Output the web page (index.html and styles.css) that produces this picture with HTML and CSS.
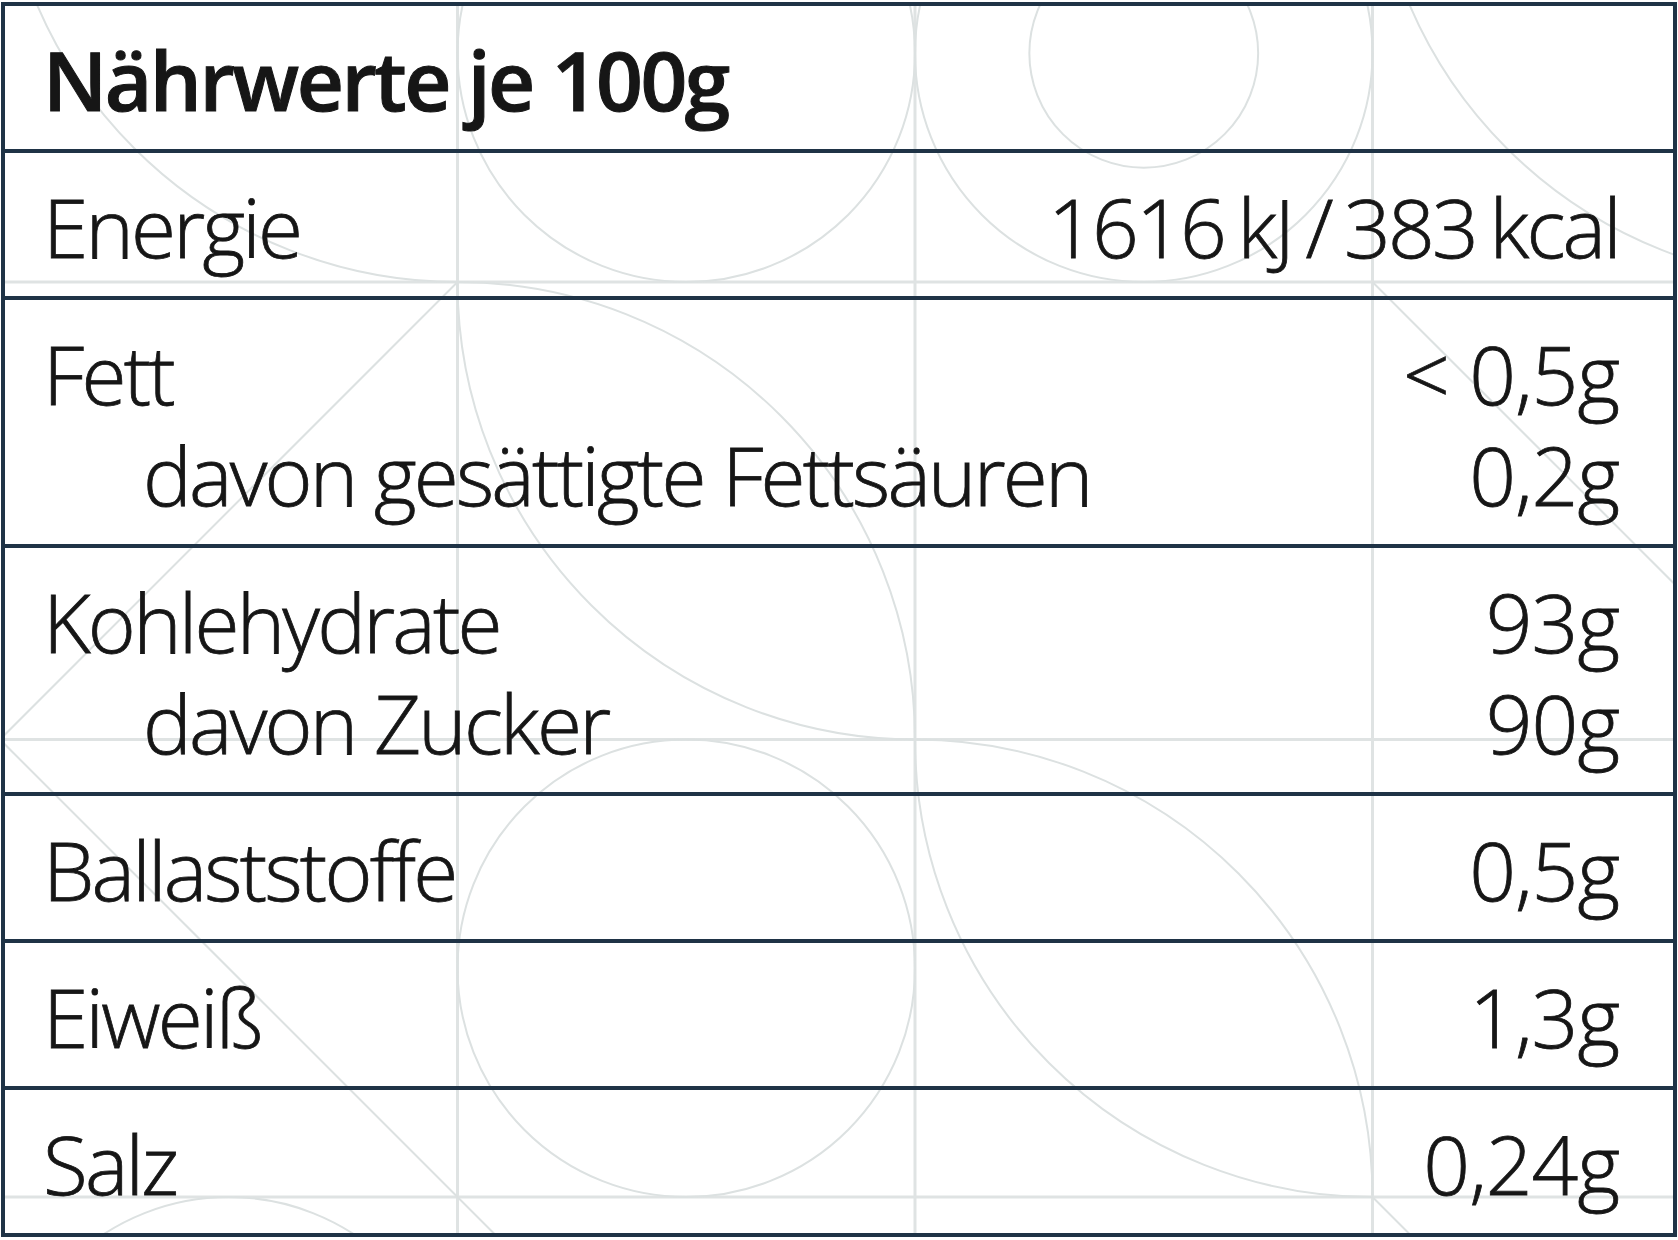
FILE: index.html
```html
<!DOCTYPE html>
<html lang="de">
<head>
<meta charset="utf-8">
<title>Nährwerte je 100g</title>
<link rel="stylesheet" href="styles.css">
</head>
<body>
<div class="panel">
  <svg class="pattern" width="1678" height="1240" viewBox="0 0 1678 1240" aria-hidden="true">
    <g class="grid">
      <line x1="457.5" y1="0" x2="457.5" y2="1240"/>
      <line x1="915" y1="0" x2="915" y2="1240"/>
      <line x1="1372.5" y1="0" x2="1372.5" y2="1240"/>
      <line x1="0" y1="282" x2="1678" y2="282"/>
      <line x1="0" y1="739.5" x2="1678" y2="739.5"/>
      <line x1="0" y1="1197" x2="1678" y2="1197"/>
    </g>
    <g class="motif">
      <path d="M0 -175.5 A457.5 457.5 0 0 0 457.5 282"/>
      <circle cx="686.25" cy="53.25" r="228.75"/>
      <circle cx="1143.75" cy="53.25" r="228.75"/>
      <circle cx="1143.75" cy="53.25" r="114.4"/>
      <path d="M1372.5 -175.5 A457.5 457.5 0 0 0 1830 282"/>
      <line x1="457.5" y1="282" x2="0" y2="739.5"/>
      <path d="M457.5 282 A457.5 457.5 0 0 0 915 739.5"/>
      <path d="M457.5 282 A457.5 457.5 0 0 1 915 739.5"/>
      <line x1="1372.5" y1="282" x2="1830" y2="739.5"/>
      <line x1="0" y1="739.5" x2="457.5" y2="1197"/>
      <circle cx="686.25" cy="968.25" r="228.75"/>
      <path d="M915 739.5 A457.5 457.5 0 0 0 1372.5 1197"/>
      <path d="M915 739.5 A457.5 457.5 0 0 1 1372.5 1197"/>
      <circle cx="228.75" cy="1425.75" r="228.75"/>
      <line x1="457.5" y1="1197" x2="915" y2="1654.5"/>
      <line x1="1372.5" y1="1197" x2="1830" y2="1654.5"/>
    </g>
  </svg>

  <div class="row head">
    <div class="line"><span class="label">Nährwerte je 100g</span></div>
  </div>
  <div class="row">
    <div class="line"><span class="label">Energie</span><span class="value energy">1616 kJ / 383 kcal</span></div>
  </div>
  <div class="row">
    <div class="line"><span class="label">Fett</span><span class="value">&lt; 0,5g</span></div>
    <div class="line sub"><span class="label">davon gesättigte Fettsäuren</span><span class="value">0,2g</span></div>
  </div>
  <div class="row">
    <div class="line"><span class="label">Kohlehydrate</span><span class="value">93g</span></div>
    <div class="line sub"><span class="label">davon Zucker</span><span class="value">90g</span></div>
  </div>
  <div class="row">
    <div class="line"><span class="label">Ballaststoffe</span><span class="value">0,5g</span></div>
  </div>
  <div class="row">
    <div class="line"><span class="label">Eiweiß</span><span class="value">1,3g</span></div>
  </div>
  <div class="row last">
    <div class="line"><span class="label">Salz</span><span class="value">0,24g</span></div>
  </div>
</div>
</body>
</html>
```

FILE: styles.css
```css
html, body {
  margin: 0;
  padding: 0;
  background: #ffffff;
}

body {
  width: 1678px;
  height: 1240px;
  overflow: hidden;
}

.panel {
  position: relative;
  margin: 2px 1px 0 1px;
  border: 4px solid #1f3346;
  overflow: hidden;
  font-family: "Open Sans", "Noto Sans", "DejaVu Sans", sans-serif;
  font-weight: 300;
  font-size: 82px;
  letter-spacing: -2.8px;
  color: #161616;
  -webkit-text-stroke: 0.8px #161616;
}

.pattern {
  position: absolute;
  left: -5px;
  top: -6px;
  z-index: 0;
  pointer-events: none;
}

.pattern .grid line {
  stroke: #dfe3e3;
  stroke-width: 3;
  fill: none;
}

.pattern .motif path,
.pattern .motif line,
.pattern .motif circle {
  stroke: #dce1e1;
  stroke-width: 2;
  fill: none;
}

.row {
  position: relative;
  z-index: 1;
  padding: 23px 54px 19px 38px;
  border-bottom: 4px solid #1f3346;
}

.row.last {
  border-bottom: none;
}

.line {
  display: flex;
  justify-content: space-between;
  align-items: baseline;
  height: 101px;
  line-height: 101px;
  white-space: nowrap;
}

.line.sub {
  padding-left: 100px;
}

.value {
  letter-spacing: -1px;
}

.value.energy {
  letter-spacing: -2.8px;
  word-spacing: -5px;
}

.head .label {
  font-weight: 600;
  letter-spacing: -2.5px;
  -webkit-text-stroke: 1px #161616;
}
```
